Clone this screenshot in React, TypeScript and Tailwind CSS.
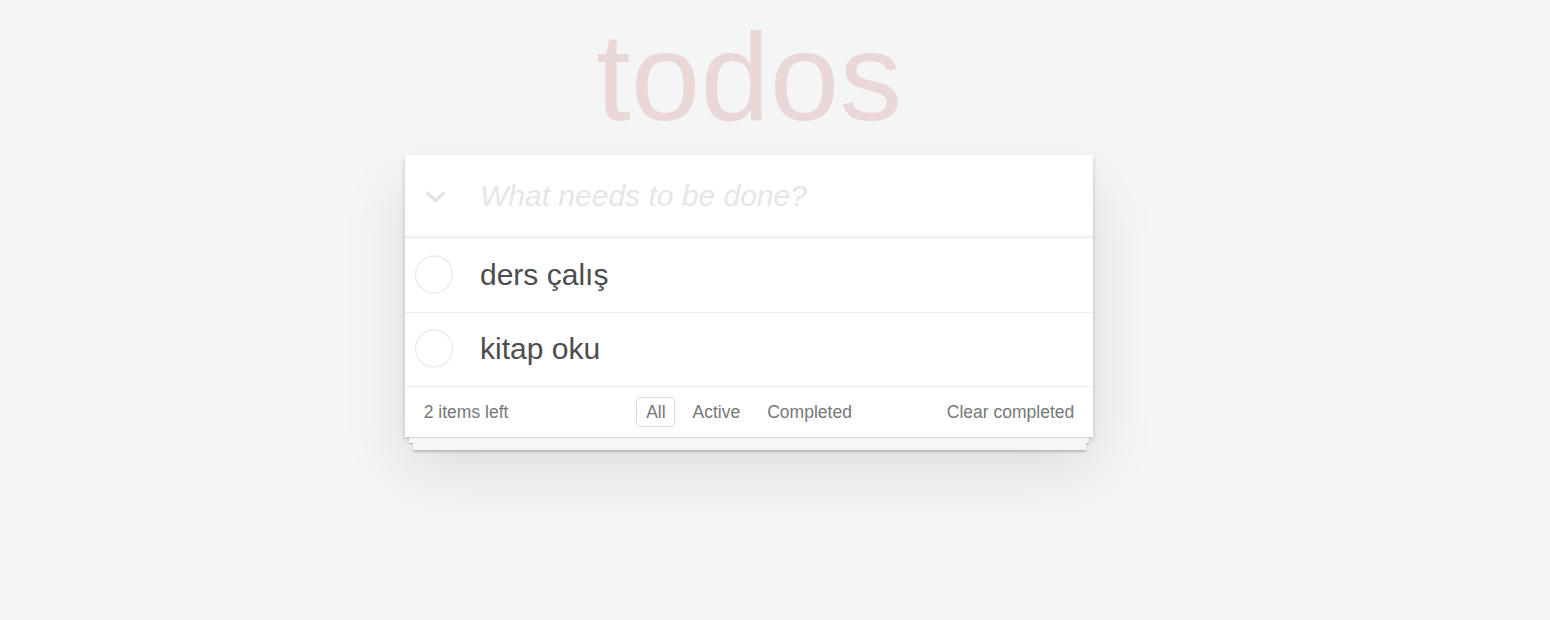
import { useState } from 'react';

// ── Types ────────────────────────────────────────────────────────

interface Todo {
  id: number;
  title: string;
  completed: boolean;
}

type Filter = 'all' | 'active' | 'completed';

const FILTERS: { key: Filter; label: string }[] = [
  { key: 'all', label: 'All' },
  { key: 'active', label: 'Active' },
  { key: 'completed', label: 'Completed' },
];

// ── Component ────────────────────────────────────────────────────

export default function App() {
  const [todos] = useState<Todo[]>([
    { id: 1, title: 'ders çalış', completed: false },
    { id: 2, title: 'kitap oku', completed: false },
  ]);
  const [filter, setFilter] = useState<Filter>('all');

  const left = todos.filter((t) => !t.completed).length;

  return (
    <div className="min-h-[620px] w-full bg-[#f5f5f5] font-['Liberation_Sans',Arial,sans-serif] text-[17.5px] leading-[1.4em] text-[#4d4d4d]">
      <div className="w-[1498px]">
        {/* Title */}
        <h1 className="pt-[14px] text-center text-[125px] font-normal leading-none text-[rgba(175,47,47,0.15)]">
          todos
        </h1>

        <div className="mx-auto mt-[16px] w-[688px]">
          <section className="bg-white shadow-[0_2.5px_5px_0_rgba(0,0,0,0.2),0_31px_62px_0_rgba(0,0,0,0.1)]">
            {/* New todo */}
            <header className="flex items-center shadow-[inset_0_-2.5px_1px_rgba(0,0,0,0.03)]">
              <div className="flex w-[60px] justify-center pt-[2px]">
                <svg width="21" height="12" viewBox="0 0 21 12" fill="none">
                  <polyline
                    points="1.5 1.5 10.5 9.5 19.5 1.5"
                    stroke="#e3e3e3"
                    strokeWidth="3.2"
                    strokeLinejoin="miter"
                  />
                </svg>
              </div>
              <input
                className="h-[82px] flex-1 bg-transparent py-[20px] pl-[15px] pr-[20px] text-[30px] leading-[42px] text-[#4d4d4d] outline-none placeholder:italic placeholder:text-[#e6e6e6]"
                placeholder="What needs to be done?"
              />
            </header>

            {/* List */}
            <ul className="border-t border-[#e6e6e6]">
              {todos.map((todo) => (
                <li key={todo.id} className="flex items-center border-b border-[#ededed]">
                  <div className="flex w-[75px] pl-[10px]">
                    <svg width="40" height="40" viewBox="0 0 40 40" fill="none">
                      <circle cx="19" cy="19.5" r="18.5" stroke="#ebebeb" strokeWidth="1.3" />
                    </svg>
                  </div>
                  <label className="flex-1 py-[18.75px] pr-[18.75px] text-[30px] leading-[36px] text-[#4d4d4d]">
                    {todo.title}
                  </label>
                </li>
              ))}
            </ul>

            {/* Footer */}
            <footer className="grid h-[50px] grid-cols-[1fr_auto_1fr] items-center px-[18.75px] text-[17.5px] leading-[24.5px] text-[#777]">
              <span className="pt-[1px]">
                {left} items left
              </span>
              <ul>
                {FILTERS.map((f) => (
                  <li key={f.key} className="inline">
                    <a
                      href="#"
                      onClick={(e) => {
                        e.preventDefault();
                        setFilter(f.key);
                      }}
                      className={`mx-[3.75px] rounded-[3.75px] border px-[8.75px] py-[3.75px] ${
                        filter === f.key ? 'border-[rgba(175,47,47,0.2)]' : 'border-transparent'
                      }`}
                    >
                      {f.label}
                    </a>
                  </li>
                ))}
              </ul>
              <span className="pt-[1px] text-right">Clear completed</span>
            </footer>
          </section>

          {/* Stacked paper edges */}
          <div className="mx-[3.75px] h-[6.25px] bg-[#f6f6f6] shadow-[inset_0_1px_1px_rgba(0,0,0,0.15),0_1px_1px_rgba(0,0,0,0.2)]" />
          <div className="mx-[7.5px] h-[6.25px] bg-[#f6f6f6] shadow-[0_1.5px_2px_rgba(0,0,0,0.2)]" />
        </div>
      </div>
    </div>
  );
}
